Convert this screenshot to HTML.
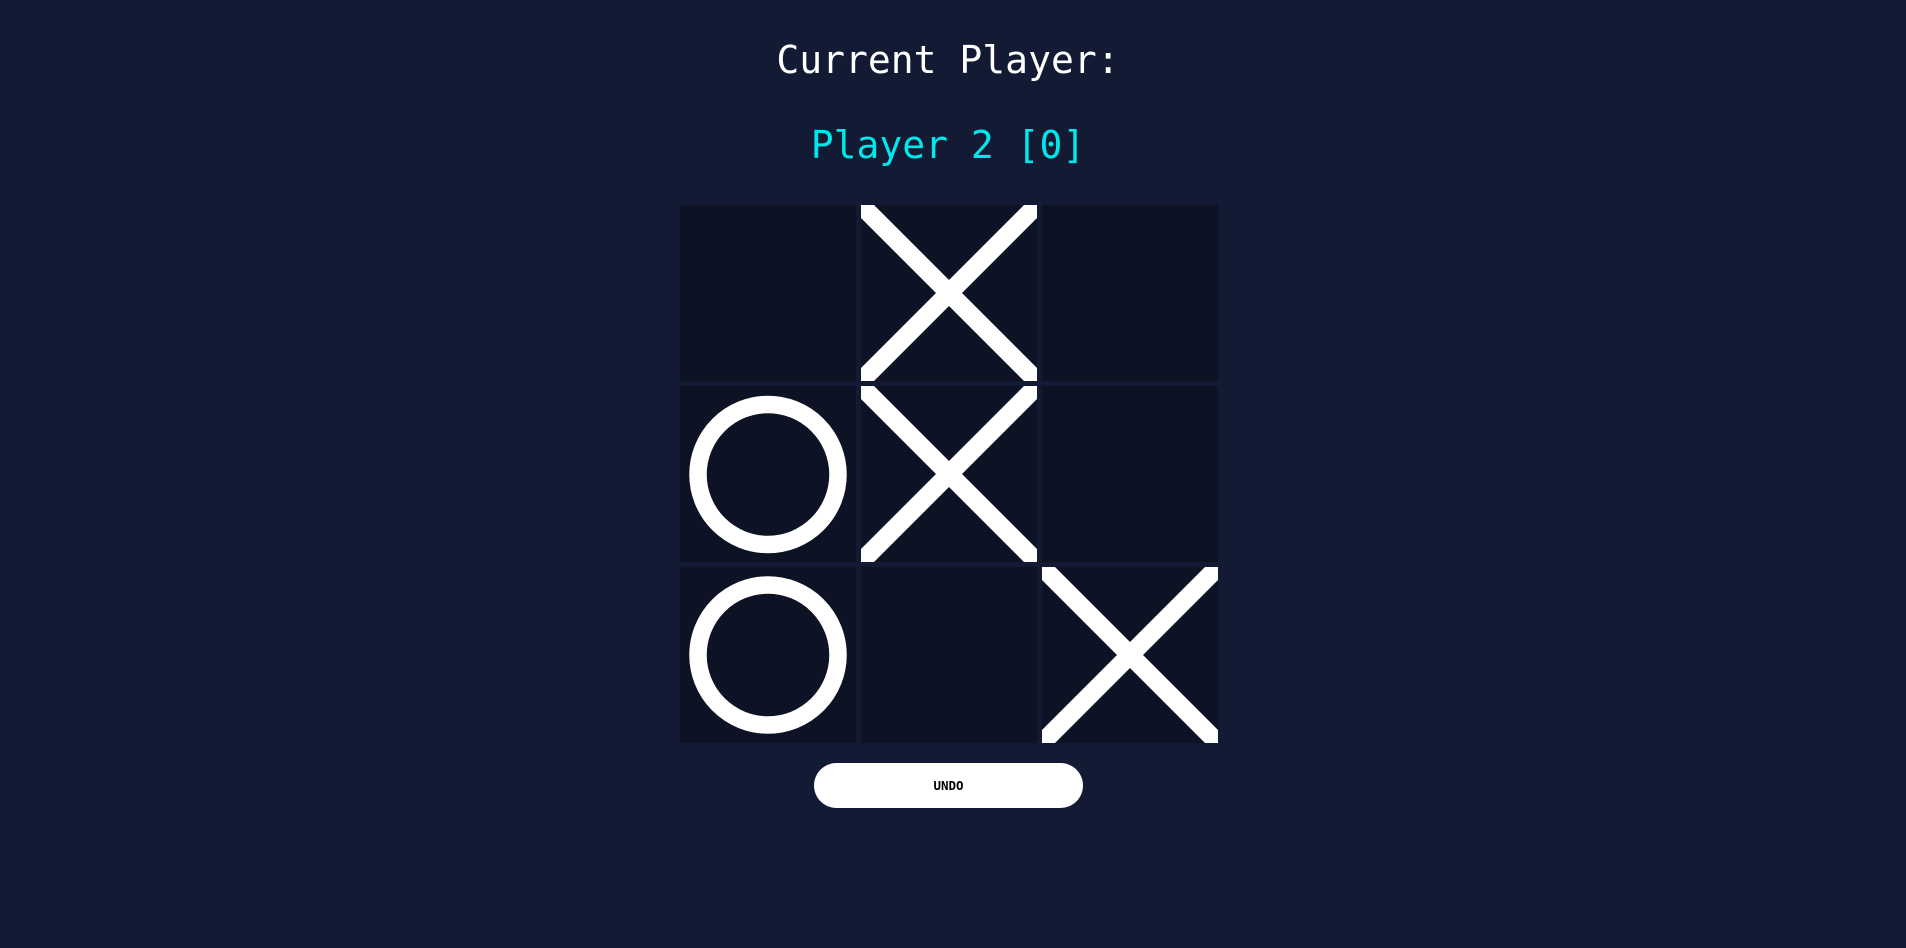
<!DOCTYPE html>
<html><head><meta charset="utf-8"><style>
html,body{margin:0;padding:0;background:#131a34;width:1906px;height:948px;overflow:hidden}
.t{position:absolute;left:-5px;width:1906px;text-align:center;font-family:"DejaVu Sans Mono","Liberation Mono",monospace;font-size:38px;line-height:1}
.c{position:absolute;width:176px;height:176px;background:#0d1225}
.c svg{display:block}
.btn{position:absolute;left:814px;top:763px;width:269px;height:45px;border-radius:23px;background:#fff;text-align:center;line-height:46px;font-family:"DejaVu Sans Mono","Liberation Mono",monospace;font-weight:bold;font-size:12.5px;color:#000}
</style></head><body>
<div class="t" style="top:41px;color:#fff">Current Player:</div>
<div class="t" style="top:126px;color:#00e8ec">Player 2 [0]</div>

<div class="c" style="left:680px;top:205px"></div>
<div class="c" style="left:861px;top:205px"><svg width="176" height="176"><polygon fill="#fff" points="0,0 13,0 176,163 176,176 163,176 0,13"/><polygon fill="#fff" points="176,0 163,0 0,163 0,176 13,176 176,13"/></svg></div>
<div class="c" style="left:1042px;top:205px"></div>

<div class="c" style="left:680px;top:386px"><svg width="176" height="176"><circle cx="88" cy="88.5" r="70" fill="none" stroke="#fff" stroke-width="17.5"/></svg></div>
<div class="c" style="left:861px;top:386px"><svg width="176" height="176"><polygon fill="#fff" points="0,0 13,0 176,163 176,176 163,176 0,13"/><polygon fill="#fff" points="176,0 163,0 0,163 0,176 13,176 176,13"/></svg></div>
<div class="c" style="left:1042px;top:386px"></div>

<div class="c" style="left:680px;top:567px"><svg width="176" height="176"><circle cx="88" cy="88" r="70" fill="none" stroke="#fff" stroke-width="17.5"/></svg></div>
<div class="c" style="left:861px;top:567px"></div>
<div class="c" style="left:1042px;top:567px"><svg width="176" height="176"><polygon fill="#fff" points="0,0 13,0 176,163 176,176 163,176 0,13"/><polygon fill="#fff" points="176,0 163,0 0,163 0,176 13,176 176,13"/></svg></div>

<div class="btn">UNDO</div>
</body></html>
